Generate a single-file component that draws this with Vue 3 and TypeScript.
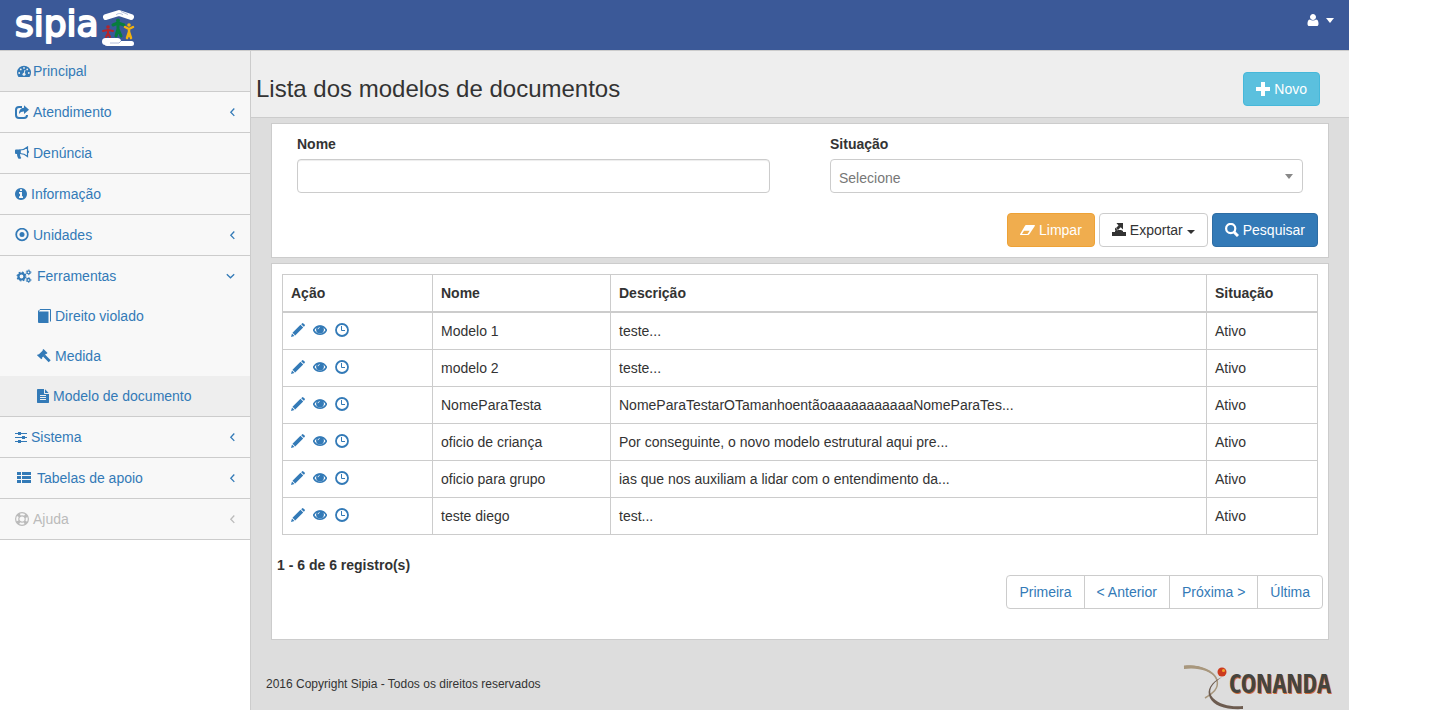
<script setup lang="ts">
import { ref } from 'vue'

interface MenuItem {
  label: string
  icon: string
  size?: 'narrow' | 'wide'
  tight?: boolean
  active?: boolean
  disabled?: boolean
  arrow?: 'left' | 'down'
  children?: MenuItem[]
}

interface Modelo {
  nome: string
  descricao: string
  situacao: string
}

const menu: MenuItem[] = [
  { label: 'Principal', icon: 'dashboard', size: 'wide', tight: true, active: true },
  { label: 'Atendimento', icon: 'share', arrow: 'left' },
  { label: 'Denúncia', icon: 'bullhorn' },
  { label: 'Informação', icon: 'info', size: 'narrow' },
  { label: 'Unidades', icon: 'target', arrow: 'left' },
  {
    label: 'Ferramentas',
    icon: 'cogs',
    size: 'wide',
    arrow: 'down',
    children: [
      { label: 'Direito violado', icon: 'book' },
      { label: 'Medida', icon: 'gavel' },
      { label: 'Modelo de documento', icon: 'file', size: 'narrow', active: true },
    ],
  },
  { label: 'Sistema', icon: 'sliders', size: 'narrow', arrow: 'left' },
  { label: 'Tabelas de apoio', icon: 'list', size: 'wide', arrow: 'left' },
  { label: 'Ajuda', icon: 'ring', arrow: 'left', disabled: true },
]

const modelos: Modelo[] = [
  { nome: 'Modelo 1', descricao: 'teste...', situacao: 'Ativo' },
  { nome: 'modelo 2', descricao: 'teste...', situacao: 'Ativo' },
  { nome: 'NomeParaTesta', descricao: 'NomeParaTestarOTamanhoentãoaaaaaaaaaaaNomeParaTes...', situacao: 'Ativo' },
  { nome: 'oficio de criança', descricao: 'Por conseguinte, o novo modelo estrutural aqui pre...', situacao: 'Ativo' },
  { nome: 'oficio para grupo', descricao: 'ias que nos auxiliam a lidar com o entendimento da...', situacao: 'Ativo' },
  { nome: 'teste diego', descricao: 'test...', situacao: 'Ativo' },
]

const acoes = [
  { icon: 'pencil', label: 'Editar' },
  { icon: 'eye', label: 'Visualizar' },
  { icon: 'clock', label: 'Histórico' },
]

const paginas = ['Primeira', '< Anterior', 'Próxima >', 'Última']

const nome = ref('')
const situacao = ref('')

function limpar() {
  nome.value = ''
  situacao.value = ''
}
</script>

<template>
  <div class="app">
    <svg class="sprite" aria-hidden="true">
      <symbol id="dashboard" viewBox="0 0 14 14">
        <path fill="currentColor" d="M1.5 13A7 7 0 1 1 12.5 13Z" />
        <g fill="#eee"><circle cx="2.2" cy="9" r=".9" /><circle cx="3.8" cy="5.4" r=".9" /><circle cx="7" cy="3.9" r=".9" /><circle cx="10.2" cy="5.4" r=".9" /><circle cx="11.8" cy="9" r=".9" /><circle cx="7" cy="10.2" r="1.5" /></g>
        <path d="M7 10l1-4" stroke="#eee" />
      </symbol>
      <symbol id="share" viewBox="0 0 14 14">
        <path fill="none" stroke="currentColor" stroke-width="2" d="M7 2H4a3 3 0 0 0-3 3v5a3 3 0 0 0 3 3h5a3 3 0 0 0 3-3" />
        <path fill="currentColor" d="M9 .3 14 4.7 9 9V6.5C6.8 6.4 5.3 7.2 4 9c0-3.600 1.700-6 5-6.200z" />
      </symbol>
      <symbol id="bullhorn" viewBox="0 0 14 14">
        <path fill="currentColor" d="M1 3.500h4.500V8H1A1 1 0 0 1 0 7V4.500a1 1 0 0 1 1-1zM2 7.500h3c0 2 .3 3 1.300 4.500-.8 1-2.300 1-3 .5C2.400 11 2 9.500 2 7.500z" />
        <path fill="none" stroke="currentColor" stroke-width="1.200" d="M5 4C8 4 10.500 2.800 12.500 1v9.500C10.500 8.700 8 7.600 5 7.500z" />
        <path fill="currentColor" d="M12.500 4.300a1.500 1.500 0 0 1 0 3z" />
      </symbol>
      <symbol id="info" viewBox="128 0 1536 1792">
        <path fill="currentColor" d="M1152 1376v-160q0-14-9-23t-23-9h-96v-512q0-14-9-23t-23-9h-320q-14 0-23 9t-9 23v160q0 14 9 23t23 9h96v320h-96q-14 0-23 9t-9 23v160q0 14 9 23t23 9h448q14 0 23-9t9-23zm-128-896v-160q0-14-9-23t-23-9h-192q-14 0-23 9t-9 23v160q0 14 9 23t23 9h192q14 0 23-9t9-23zm640 416q0 209-103 385.500t-279.500 279.500-385.500 103-385.500-103-279.500-279.500-103-385.500 103-385.500 279.500-279.500 385.500-103 385.500 103 279.500 279.500 103 385.500z" />
      </symbol>
      <symbol id="target" viewBox="0 0 14 14">
        <circle cx="7" cy="6.500" r="5.800" fill="none" stroke="currentColor" stroke-width="1.800" />
        <circle cx="7" cy="6.500" r="2.500" fill="currentColor" />
      </symbol>
      <symbol id="cogs" viewBox="0 0 15 14">
        <g fill="none" stroke="currentColor">
          <circle cx="5" cy="7.500" r="3" stroke-width="2.200" />
          <circle cx="5" cy="7.500" r="4.400" stroke-width="1.200" stroke-dasharray="1.800 1.656" />
          <circle cx="12" cy="3.300" r="1.500" stroke-width="1.300" />
          <circle cx="12" cy="3.300" r="2.400" stroke-width=".8" stroke-dasharray="1.300 1.213" />
          <circle cx="12" cy="11" r="1.500" stroke-width="1.300" />
          <circle cx="12" cy="11" r="2.400" stroke-width=".8" stroke-dasharray="1.300 1.213" />
        </g>
      </symbol>
      <symbol id="book" viewBox="0 0 14 14">
        <path fill="currentColor" d="M1 2.500h10.500V14H2a1 1 0 0 1-1-1z" />
        <path fill="none" stroke="currentColor" d="M1.500 4V2L3 .5h10.500V12.500" />
      </symbol>
      <symbol id="gavel" viewBox="0 0 14 14">
        <path fill="currentColor" d="M6.500 0 10.500 4 9.500 5 9 4.700 5 8.700 5.300 9.300 4.300 10.300 0 6.300l1-1 .7.300 4.100-4-.3-.6z" />
        <path stroke="currentColor" stroke-width="2.800" d="m7 6.500 5.700 5.700" />
      </symbol>
      <symbol id="file" viewBox="128 0 1536 1792">
        <path fill="currentColor" d="M1596 476q14 14 28 36h-472v-472q22 14 36 28zm-476 164h544v1056q0 40-28 68t-68 28h-1344q-40 0-68-28t-28-68v-1600q0-40 28-68t68-28h800v544q0 40 28 68t68 28zm160 736v-64q0-14-9-23t-23-9h-704q-14 0-23 9t-9 23v64q0 14 9 23t23 9h704q14 0 23-9t9-23zm0-256v-64q0-14-9-23t-23-9h-704q-14 0-23 9t-9 23v64q0 14 9 23t23 9h704q14 0 23-9t9-23zm0-256v-64q0-14-9-23t-23-9h-704q-14 0-23 9t-9 23v64q0 14 9 23t23 9h704q14 0 23-9t9-23z" />
      </symbol>
      <symbol id="sliders" viewBox="0 0 12 14">
        <path stroke="currentColor" d="M0 3.500h12M0 7.500h12M0 11.500h12" />
        <path fill="currentColor" d="M3 2h3v3H3zM7 6h3v3H7zM3 10h3v3H3z" />
      </symbol>
      <symbol id="list" viewBox="0 0 14 14">
        <path fill="currentColor" d="M0 1h4v3H0zM5 1h9v3H5zM0 5h4v3H0zM5 5h9v3H5zM0 9h4v3H0zM5 9h9v3H5z" />
      </symbol>
      <symbol id="ring" viewBox="0 0 14 14">
        <g fill="none" stroke="currentColor">
          <circle cx="7" cy="7" r="6.400" stroke-width="1.200" />
          <circle cx="7" cy="7" r="3.200" stroke-width="1.200" />
          <circle cx="7" cy="7" r="4.800" stroke-width="3.200" stroke-dasharray="3 4.540" transform="rotate(27 7 7)" />
        </g>
      </symbol>
      <symbol id="user" viewBox="192 0 1408 1792">
        <path fill="currentColor" d="M1600 1399q0 109-62.500 187t-150.500 78h-982q-88 0-150.500-78t-62.500-187q0-85 8.500-160.500t31.500-152 58.500-131 94-89 134.500-34.500q131 128 377 128t377-128q76 0 134.500 34.500t94 89 58.500 131 31.500 152 8.500 160.500zm-320-887q0 159-112.500 271.500t-271.500 112.500-271.500-112.500-112.500-271.500 112.500-271.500 271.500-112.500 271.500 112.500 112.500 271.500z" />
      </symbol>
      <symbol id="plus" viewBox="0 0 14 14"><path fill="currentColor" d="M5 0h4v5h5v4H9v5H5V9H0V5h5z" /></symbol>
      <symbol id="eraser" viewBox="0 0 15 14">
        <path fill="currentColor" d="M6 2h8.300c.6 0 .9.500.5 1L9.500 11c-.4.600-.8 1-1.500 1H.7C.1 12-.2 11.500.2 11L5 2.700C5.300 2.200 5.500 2 6 2zM4 7.700 2 11h5.500l2.200-3.300z" />
      </symbol>
      <symbol id="export" viewBox="0 0 14 14">
        <path fill="currentColor" d="M0 9h3V8l3-1h3l2 1v1h3v4H0zM4 -.5h7v7L8.700 4.200 6 7 4 5 6.500 2.500zM3 4.500v3h3z" />
      </symbol>
      <symbol id="search" viewBox="0 0 14 14">
        <circle cx="5.700" cy="5.500" r="4.600" fill="none" stroke="currentColor" stroke-width="2.200" />
        <path stroke="currentColor" stroke-width="3" d="m8.500 8.500 4.500 4.500" />
      </symbol>
      <symbol id="pencil" viewBox="0 0 14 14">
        <path fill="currentColor" d="M0 14l1-3.500 2.500 2.500zM1.500 9.800l8-8 2.700 2.700-8 8zM10.200 1.200l.8-.8a1 1 0 0 1 1.400 0l1.200 1.200a1 1 0 0 1 0 1.400l-.8.8z" />
      </symbol>
      <symbol id="eye" viewBox="0 0 14 14">
        <path fill="none" stroke="currentColor" stroke-width="1.600" d="M.6 7.200C2 4.500 4.300 3 7 3s5 1.500 6.400 4.200C12 9.800 9.700 11.300 7 11.300S2 9.800.6 7.200z" />
        <circle cx="7" cy="6.500" r="3.900" fill="currentColor" />
        <path fill="none" stroke="#fff" stroke-width=".8" d="M5 6.200c.1-1 .7-1.600 1.700-1.700" />
      </symbol>
      <symbol id="clock" viewBox="0 0 14 14">
        <circle cx="7" cy="7" r="6" fill="none" stroke="currentColor" stroke-width="1.800" />
        <path fill="none" stroke="currentColor" d="M6.500 3v4.500H10" />
      </symbol>
      <symbol id="angle-left" viewBox="0 0 9 14"><path fill="none" stroke="currentColor" stroke-width="1.300" d="M8.300 3.500 4.800 7.200l3.500 3.700" /></symbol>
      <symbol id="angle-down" viewBox="0 0 9 14"><path fill="none" stroke="currentColor" stroke-width="1.300" d="M.8 5.300 4.500 8.800l3.700-3.500" /></symbol>
    </svg>

    <header class="topbar">
      <a class="brand" href="#" aria-label="sipia">
        <svg width="122" height="50" viewBox="0 0 122 50">
          <text class="wordmark" x="0" y="36">sipia</text>
          <g fill="none" stroke="#fff" stroke-width="6" stroke-linecap="round" stroke-linejoin="round">
            <path d="M91 17l13-4 12 4" />
          </g>
          <path fill="none" stroke="#9cabd0" stroke-width=".8" d="M101 15c2-2 5-2 7 0M106 11.500l7 3" />
          <path stroke="#fff" stroke-width="7" stroke-linecap="round" d="M90.500 41.500h12" />
          <path stroke="#fff" stroke-width="5" stroke-linecap="round" d="M92 43.500h24.500" />
          <path stroke="#9cabd0" stroke-width=".8" fill="none" d="M95 43h9l2-2" />
          <g stroke-linecap="round" stroke-linejoin="round" fill="none">
            <g stroke="#b3262b" stroke-width="2"><path d="M88 31l5-1 5 1M93 30v3l-2 4M93 33l2 4" /></g>
            <g stroke="#087d3d" stroke-width="3"><path d="M98 25l5-2 6 2M103 23v6l-2 7M103 29l3 7" /></g>
            <g stroke="#f3b20f" stroke-width="2.500"><path d="M110 27l4 2 4-2M114 29v3l-2 6M114 32l2 6" /></g>
          </g>
          <circle cx="93" cy="27" r="1.800" fill="#b3262b" />
          <circle cx="103" cy="20.500" r="2" fill="#087d3d" />
          <circle cx="114" cy="25" r="1.800" fill="#f3b20f" />
        </svg>
      </a>
      <button class="user" type="button" aria-label="Usuário">
        <svg class="icon narrow"><use href="#user" /></svg>
        <span class="caret"></span>
      </button>
    </header>

    <div class="body">
      <nav class="sidebar">
        <ul>
          <li v-for="item in menu" :key="item.label">
            <a href="#" :class="{ active: item.active, disabled: item.disabled, tight: item.tight }">
              <svg :class="['icon', item.size]"><use :href="'#' + item.icon" /></svg>
              <span>{{ item.label }}</span>
              <svg v-if="item.arrow" class="icon arrow"><use :href="'#angle-' + item.arrow" /></svg>
            </a>
            <ul v-if="item.children" class="sub">
              <li v-for="child in item.children" :key="child.label">
                <a href="#" :class="{ active: child.active }">
                  <svg :class="['icon', child.size]"><use :href="'#' + child.icon" /></svg>
                  <span>{{ child.label }}</span>
                </a>
              </li>
            </ul>
          </li>
        </ul>
      </nav>

      <main class="content">
        <div class="heading">
          <h1>Lista dos modelos de documentos</h1>
          <button class="btn info" type="button"><svg class="icon"><use href="#plus" /></svg>Novo</button>
        </div>

        <form class="panel filter" @submit.prevent>
          <div class="fields">
            <div class="field">
              <label for="nome">Nome</label>
              <input id="nome" v-model="nome" type="text" />
            </div>
            <div class="field">
              <label for="situacao">Situação</label>
              <div class="select">
                <select id="situacao" v-model="situacao">
                  <option value="">Selecione</option>
                  <option value="ativo">Ativo</option>
                  <option value="inativo">Inativo</option>
                </select>
              </div>
            </div>
          </div>
          <div class="buttons">
            <button class="btn warning" type="button" @click="limpar"><svg class="icon medium"><use href="#eraser" /></svg>Limpar</button>
            <button class="btn" type="button"><svg class="icon"><use href="#export" /></svg>Exportar<span class="caret"></span></button>
            <button class="btn primary" type="submit"><svg class="icon"><use href="#search" /></svg>Pesquisar</button>
          </div>
        </form>

        <section class="panel results">
          <table>
            <colgroup><col class="c-acao" /><col class="c-nome" /><col /><col class="c-situacao" /></colgroup>
            <thead>
              <tr><th>Ação</th><th>Nome</th><th>Descrição</th><th>Situação</th></tr>
            </thead>
            <tbody>
              <tr v-for="m in modelos" :key="m.nome">
                <td>
                  <div class="actions">
                    <a v-for="a in acoes" :key="a.icon" href="#" :aria-label="a.label"><svg class="icon"><use :href="'#' + a.icon" /></svg></a>
                  </div>
                </td>
                <td>{{ m.nome }}</td>
                <td>{{ m.descricao }}</td>
                <td>{{ m.situacao }}</td>
              </tr>
            </tbody>
          </table>
          <div class="summary">
            <strong>1 - 6 de 6 registro(s)</strong>
            <ul class="pagination">
              <li v-for="p in paginas" :key="p"><a href="#">{{ p }}</a></li>
            </ul>
          </div>
        </section>

        <footer>
          <span>2016 Copyright Sipia - Todos os direitos reservados</span>
          <svg width="152" height="46" viewBox="0 0 152 46" role="img" aria-label="Conanda">
            <path d="M1 3C16 0 31 8 34 16c2 9-4 13-12 18" fill="none" stroke="#a8977d" stroke-width="1.500" />
            <path d="M1 1.500C17 0 30 6 34 14 27 7 15 3 1 5z" fill="#a8977d" />
            <path d="M39 13C28 20 24 27 30 34c7 7 18 9 30 8v3C43 46 31 42 27 34c-4-8 1-16 12-21z" fill="#6d5c50" />
            <circle cx="39" cy="8" r="4.500" fill="#cc3a1e" />
            <circle cx="40.500" cy="6.500" r="1.500" fill="#f3a52c" />
            <text class="conanda shade" x="47" y="30">CONANDA</text>
            <text class="conanda" x="46" y="29">CONANDA</text>
          </svg>
        </footer>
      </main>
    </div>
  </div>
</template>

<style>
body {
  margin: 0;
  background: #fff;
}
</style>

<style scoped>
* {
  box-sizing: border-box;
}
.app {
  display: flex;
  flex-direction: column;
  min-height: 100vh;
  margin-right: 95px;
  color: #333;
  font: 14px/20px "Liberation Sans", Arial, sans-serif;
}
.sprite {
  position: absolute;
  width: 0;
  height: 0;
}
a {
  color: #337ab7;
  text-decoration: none;
}
ul {
  margin: 0;
  padding: 0;
  list-style: none;
}
button,
input,
select {
  font: inherit;
  color: inherit;
}
.icon {
  display: block;
  flex: none;
  width: 14px;
  height: 14px;
}
.icon.narrow {
  width: 12px;
}
.icon.medium {
  width: 15px;
}
.icon.wide {
  width: 18px;
}
.caret {
  border: 4px solid transparent;
  border-top-color: currentColor;
  border-bottom: 0;
}
.topbar {
  display: flex;
  justify-content: space-between;
  align-items: flex-start;
  background: #3b5998;
  border-bottom: 1px solid #ccc;
}
.brand {
  height: 50px;
  padding-left: 15px;
}
.brand svg {
  display: block;
}
.wordmark {
  font: 36px "DejaVu Sans", Verdana, sans-serif;
  fill: #fff;
  stroke: #fff;
  stroke-width: 2px;
  stroke-linejoin: round;
}
.user {
  display: flex;
  align-items: center;
  gap: 7px;
  height: 40px;
  padding: 0 15px;
  border: 0;
  background: none;
  color: #fff;
}
.user .caret {
  border-top-width: 5px;
}
.body {
  display: flex;
  flex: 1;
}
.sidebar {
  flex: none;
  width: 250px;
}
.sidebar > ul > li {
  border-bottom: 1px solid #ccc;
  background: #f8f8f8;
}
.sidebar a {
  display: flex;
  align-items: center;
  gap: 4px;
  padding: 10px 15px;
}
.sidebar a.tight {
  gap: 0;
}
.sidebar a.active {
  background: #eee;
}
.sidebar a.disabled {
  color: #bbb;
}
.sidebar .sub a {
  padding-left: 37px;
}
.sidebar .arrow {
  width: 9px;
  margin-left: auto;
}
.content {
  display: flex;
  flex: 1;
  flex-direction: column;
  min-width: 0;
  border-left: 1px solid #ccc;
  background: #ddd;
}
.heading {
  display: flex;
  justify-content: space-between;
  align-items: center;
  padding: 21px 29px 11px 5px;
  border-bottom: 1px solid #ccc;
  background: #eee;
}
h1 {
  margin: 0;
  font-size: 24px;
  font-weight: 400;
  line-height: 26px;
}
.btn {
  display: flex;
  align-items: center;
  gap: 4px;
  height: 34px;
  padding: 6px 12px;
  border: 1px solid #ccc;
  border-radius: 4px;
  background: #fff;
}
.btn.info {
  border-color: #46b8da;
  background: #5bc0de;
  color: #fff;
}
.btn.warning {
  border-color: #eea236;
  background: #f0ad4e;
  color: #fff;
}
.btn.primary {
  border-color: #2e6da4;
  background: #337ab7;
  color: #fff;
}
.btn .caret {
  margin-top: 4px;
}
.panel {
  margin: 5px 20px 0;
  border: 1px solid #ccc;
  background: #fff;
}
.filter {
  padding: 10px;
}
.fields {
  display: grid;
  grid-template-columns: 1fr 1fr;
  gap: 60px;
  padding: 0 15px;
}
label {
  display: block;
  margin-bottom: 5px;
  font-weight: 700;
}
.field input,
.field select {
  display: block;
  width: 100%;
  height: 34px;
  padding: 6px 12px;
  border: 1px solid #ccc;
  border-radius: 4px;
  background: #fff;
  box-shadow: inset 0 1px 1px rgba(0, 0, 0, 0.075);
}
.field select {
  padding: 8px 8px 6px;
  color: #777;
  box-shadow: none;
  appearance: none;
}
.select {
  position: relative;
}
.select::after {
  content: "";
  position: absolute;
  top: 15px;
  right: 10px;
  border: 4px solid transparent;
  border-top: 5px solid #888;
  border-bottom: 0;
  pointer-events: none;
}
.buttons {
  display: flex;
  justify-content: flex-end;
  gap: 4px;
  margin-top: 20px;
}
.results {
  padding: 10px 5px 30px;
}
table {
  width: calc(100% - 10px);
  margin: 0 5px 20px;
  border-collapse: collapse;
  table-layout: fixed;
}
.c-acao {
  width: 150px;
}
.c-nome {
  width: 178px;
}
.c-situacao {
  width: 111px;
}
th,
td {
  padding: 8px;
  border: 1px solid #ccc;
  text-align: left;
}
th {
  border-bottom-width: 2px;
}
.actions {
  display: flex;
  gap: 8px;
  height: 20px;
  padding-top: 2px;
}
.summary strong {
  display: block;
}
.pagination {
  display: flex;
  justify-content: flex-end;
}
.pagination a {
  display: block;
  margin-left: -1px;
  padding: 6px 12px;
  border: 1px solid #ccc;
}
.pagination li:first-child a {
  border-radius: 4px 0 0 4px;
}
.pagination li:last-child a {
  border-radius: 0 4px 4px 0;
}
footer {
  display: flex;
  justify-content: space-between;
  align-items: flex-end;
  margin-top: auto;
  padding: 24px 14px 0 15px;
  font-size: 12px;
}
footer span {
  padding-bottom: 16px;
}
footer svg {
  display: block;
}
.conanda {
  font: bold 26px "Liberation Sans Narrow", "Arial Narrow", "Open Sans Condensed", "DejaVu Sans Condensed", sans-serif;
  fill: #45443f;
}
.conanda.shade {
  fill: #cf6a3c;
}
</style>
